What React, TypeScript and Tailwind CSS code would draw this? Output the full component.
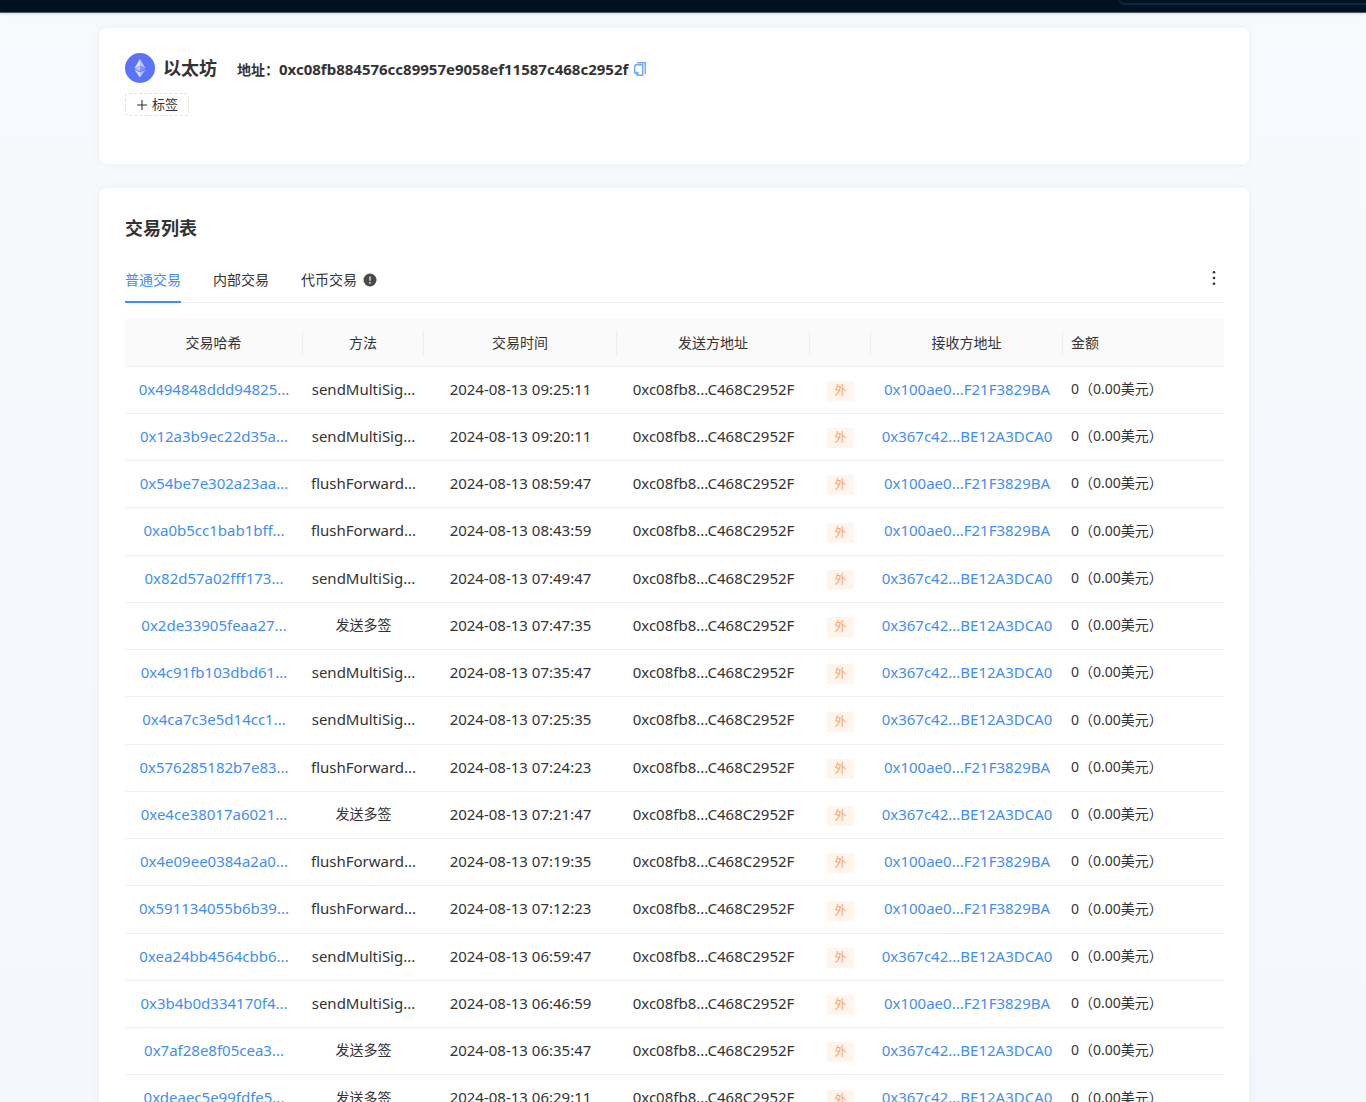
import { useState } from 'react';

const SENDER = '0xc08fb8...C468C2952F';
const RECEIVER_A = '0x100ae0...F21F3829BA';
const RECEIVER_B = '0x367c42...BE12A3DCA0';

const transactions = [
  { hash: '0x494848ddd94825...', method: 'sendMultiSig...', time: '2024-08-13 09:25:11', to: RECEIVER_A },
  { hash: '0x12a3b9ec22d35a...', method: 'sendMultiSig...', time: '2024-08-13 09:20:11', to: RECEIVER_B },
  { hash: '0x54be7e302a23aa...', method: 'flushForward...', time: '2024-08-13 08:59:47', to: RECEIVER_A },
  { hash: '0xa0b5cc1bab1bff...', method: 'flushForward...', time: '2024-08-13 08:43:59', to: RECEIVER_A },
  { hash: '0x82d57a02fff173...', method: 'sendMultiSig...', time: '2024-08-13 07:49:47', to: RECEIVER_B },
  { hash: '0x2de33905feaa27...', method: '发送多签', time: '2024-08-13 07:47:35', to: RECEIVER_B },
  { hash: '0x4c91fb103dbd61...', method: 'sendMultiSig...', time: '2024-08-13 07:35:47', to: RECEIVER_B },
  { hash: '0x4ca7c3e5d14cc1...', method: 'sendMultiSig...', time: '2024-08-13 07:25:35', to: RECEIVER_B },
  { hash: '0x576285182b7e83...', method: 'flushForward...', time: '2024-08-13 07:24:23', to: RECEIVER_A },
  { hash: '0xe4ce38017a6021...', method: '发送多签', time: '2024-08-13 07:21:47', to: RECEIVER_B },
  { hash: '0x4e09ee0384a2a0...', method: 'flushForward...', time: '2024-08-13 07:19:35', to: RECEIVER_A },
  { hash: '0x591134055b6b39...', method: 'flushForward...', time: '2024-08-13 07:12:23', to: RECEIVER_A },
  { hash: '0xea24bb4564cbb6...', method: 'sendMultiSig...', time: '2024-08-13 06:59:47', to: RECEIVER_B },
  { hash: '0x3b4b0d334170f4...', method: 'sendMultiSig...', time: '2024-08-13 06:46:59', to: RECEIVER_A },
  { hash: '0x7af28e8f05cea3...', method: '发送多签', time: '2024-08-13 06:35:47', to: RECEIVER_B },
  { hash: '0xdeaec5e99fdfe5...', method: '发送多签', time: '2024-08-13 06:29:11', to: RECEIVER_B },
];

const columns = [
  { label: '交易哈希', width: 'w-[178px]' },
  { label: '方法', width: 'w-[121px]' },
  { label: '交易时间', width: 'w-[193px]' },
  { label: '发送方地址', width: 'w-[193px]' },
  { label: '', width: 'w-[61px]' },
  { label: '接收方地址', width: 'w-[192px]' },
  { label: '金额', width: '' },
];

const tabs = ['普通交易', '内部交易', '代币交易'];

function EthereumLogo() {
  return (
    <svg viewBox="0 0 30 30" className="size-[30px] shrink-0" aria-hidden="true">
      <circle cx="15" cy="15" r="15" fill="#5b73fb" />
      <path d="M15 6 L9.5 15.2 L15 12.8Z" fill="#e3e7fe" />
      <path d="M15 6 L20.5 15.2 L15 12.8Z" fill="#b4bffd" />
      <path d="M9.5 15.2 L15 12.8 V18.4Z" fill="#b9c3fd" />
      <path d="M20.5 15.2 L15 12.8 V18.4Z" fill="#8496fc" />
      <path d="M9.5 16.4 L15 19.6 V24.4Z" fill="#e3e7fe" />
      <path d="M20.5 16.4 L15 19.6 V24.4Z" fill="#b4bffd" />
    </svg>
  );
}

function CopyIcon() {
  return (
    <svg viewBox="0 0 12 14" className="h-3.5 w-3" fill="none" stroke="#6aa9fb" strokeWidth="1.4" aria-hidden="true">
      <path d="M3 .7 H11.3 V12" />
      <path d="M1.7 2.7 H8.7 V13.3 H3.6 L.7 10.6 V3.7Z" />
      <path d="M.7 10.4 H3.8 V13.3" />
    </svg>
  );
}

function AlertIcon() {
  return (
    <svg viewBox="0 0 14 14" className="size-3.5" aria-hidden="true">
      <circle cx="7" cy="7" r="6.5" fill="#4a4a4a" />
      <path d="M7 3.4 V7.8" stroke="#fff" strokeWidth="1.2" />
      <circle cx="7" cy="9.9" r=".8" fill="#fff" />
    </svg>
  );
}

function AddressCard() {
  return (
    <section className="h-[136px] rounded-lg bg-white pl-[26px] pr-[25px] pt-[25px] shadow-[0_0_10px_rgba(0,0,0,0.05)]">
      <div className="flex h-[30px] items-center">
        <EthereumLogo />
        <h1 className="ml-2 text-lg font-bold">以太坊</h1>
        <div className="ml-5 flex items-center gap-1.5 pt-0.5">
          <p className="text-[15px] font-bold">
            <span className="text-sm">地址：</span>0xc08fb884576cc89957e9058ef11587c468c2952f
          </p>
          <button type="button" aria-label="复制地址">
            <CopyIcon />
          </button>
        </div>
      </div>
      <button
        type="button"
        className="mt-2.5 flex h-[23px] w-16 items-center justify-center gap-1 rounded-sm border border-dashed border-[#e2e2e2] text-[13px]"
      >
        <svg viewBox="0 0 12 12" className="size-3" stroke="#333" strokeWidth="1.1" aria-hidden="true">
          <path d="M6 1 V11 M1 6 H11" />
        </svg>
        标签
      </button>
    </section>
  );
}

function TransactionTabs() {
  const [active, setActive] = useState(0);

  return (
    <div className="flex h-[45px] items-stretch justify-between border-b border-[#f0f0f0]">
      <div role="tablist" className="-mb-px flex gap-8">
        {tabs.map((tab, index) => (
          <button
            key={tab}
            type="button"
            role="tab"
            aria-selected={active === index}
            onClick={() => setActive(index)}
            className={
              active === index
                ? 'flex items-center gap-1.5 border-b-2 border-[#3f8ef5] text-sm text-[#3f8ef5]'
                : 'flex items-center gap-1.5 border-b-2 border-transparent text-sm'
            }
          >
            {tab}
            {index === 2 && <AlertIcon />}
          </button>
        ))}
      </div>
      <button type="button" aria-label="更多" className="flex w-5 items-center justify-center pb-1">
        <svg viewBox="0 0 4 16" className="h-4 w-1" fill="#333" aria-hidden="true">
          <circle cx="2" cy="2.3" r="1.3" />
          <circle cx="2" cy="8" r="1.3" />
          <circle cx="2" cy="13.7" r="1.3" />
        </svg>
      </button>
    </div>
  );
}

function TransactionTable() {
  return (
    <table className="mt-4 w-full table-fixed border-separate border-spacing-0 text-center text-[15px]">
      <thead>
        <tr className="h-12 text-sm">
          {columns.map((column, index) => (
            <th
              key={index}
              className={`${column.width} group border-b border-[#f0f0f0] bg-[#fafafa] p-0 font-normal last:text-left`}
            >
              <div className="flex h-6 items-center justify-center border-r border-[#ececec] group-last:justify-start group-last:border-r-0 group-last:pl-2">
                {column.label}
              </div>
            </th>
          ))}
        </tr>
      </thead>
      <tbody className="[&_td]:border-b [&_td]:border-[#f0f0f0] [&_td]:p-0 [&_td]:pb-0.5">
        {transactions.map((tx) => (
          <tr key={tx.hash} className="h-[47px] nth-[4n]:h-12">
            <td>
              <a href="#" className="text-[#3f8ef5]">{tx.hash}</a>
            </td>
            <td className={tx.method === '发送多签' ? 'text-sm' : undefined}>{tx.method}</td>
            <td>{tx.time}</td>
            <td>{SENDER}</td>
            <td className="pb-0!">
              <span className="inline-flex h-5 w-[27px] items-center justify-center rounded-xs bg-[#fff5ec] align-middle text-xs text-[#ffa352]">
                外
              </span>
            </td>
            <td>
              <a href="#" className="text-[#3f8ef5]">{tx.to}</a>
            </td>
            <td className="pl-2! text-left text-sm">0（0.00美元）</td>
          </tr>
        ))}
      </tbody>
    </table>
  );
}

export default function App() {
  return (
    <div className="h-screen overflow-hidden bg-linear-to-b from-[#f7f9fd] to-[#f4f8fc] font-['Noto_Sans','Noto_Sans_CJK_SC',sans-serif] text-[#333]">
      <header className="flex h-[13px] justify-end border-b border-[#4c5a68] bg-[#001220] shadow-sm">
        <div className="h-[5px] w-[247px] rounded-bl-lg border-b-2 border-l border-[#0a2947]" />
      </header>
      <main className="pr-[18px] pt-[15px]">
        <div className="mx-auto flex max-w-[1150px] flex-col gap-6">
          <AddressCard />
          <section className="rounded-lg bg-white pl-[26px] pr-[25px] pt-[26px] shadow-[0_0_10px_rgba(0,0,0,0.05)]">
            <h2 className="mb-4 text-lg font-bold">交易列表</h2>
            <TransactionTabs />
            <TransactionTable />
          </section>
        </div>
      </main>
    </div>
  );
}
